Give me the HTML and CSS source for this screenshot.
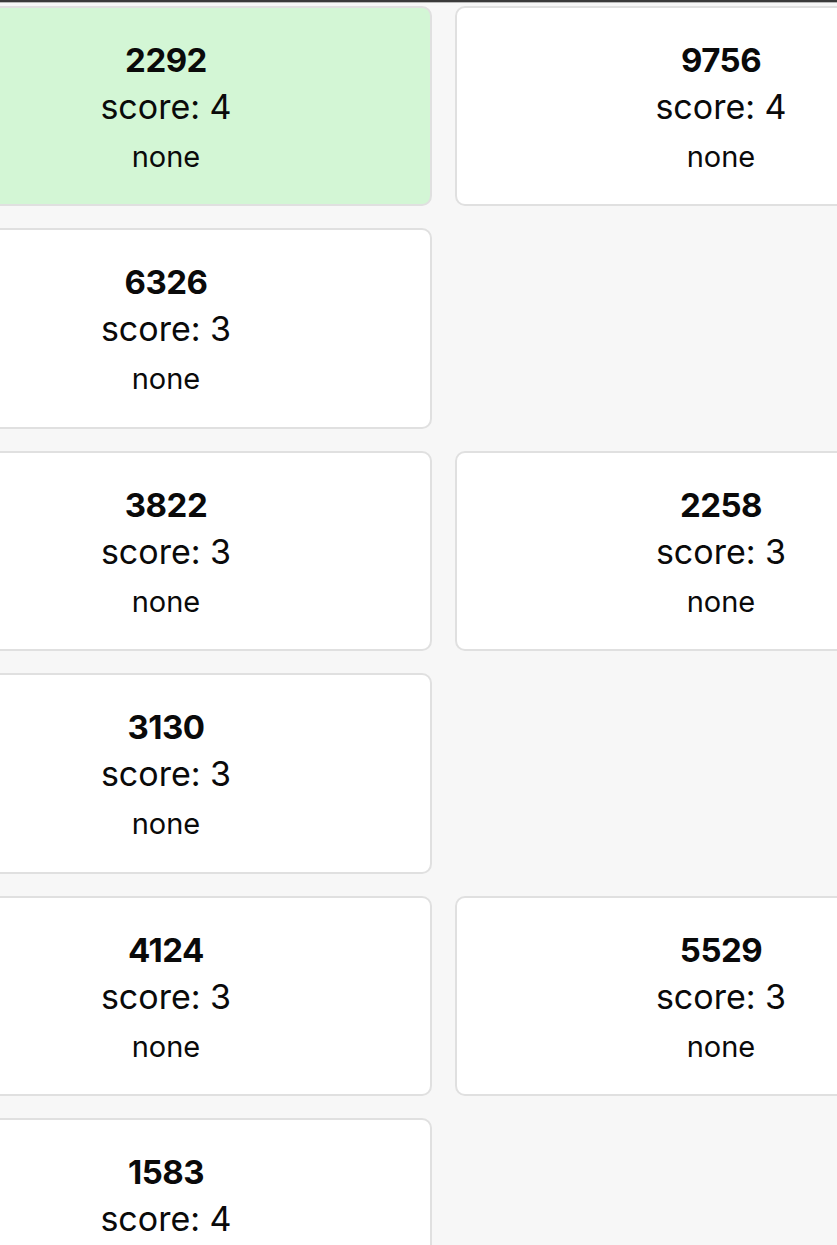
FILE: index.html
```html
<!DOCTYPE html>
<html>
<head>
<meta charset="utf-8">
<link rel="stylesheet" href="styles.css">
</head>
<body>
<div class="topbar"></div>
<div class="grid">
  <div class="card win"><div class="id">2292</div><div class="score">score: 4</div><div class="note">none</div></div>
  <div class="card"><div class="id">9756</div><div class="score">score: 4</div><div class="note">none</div></div>
  <div class="card"><div class="id">6326</div><div class="score">score: 3</div><div class="note">none</div></div>
  <div class="empty"></div>
  <div class="card"><div class="id">3822</div><div class="score">score: 3</div><div class="note">none</div></div>
  <div class="card"><div class="id">2258</div><div class="score">score: 3</div><div class="note">none</div></div>
  <div class="card"><div class="id">3130</div><div class="score">score: 3</div><div class="note">none</div></div>
  <div class="empty"></div>
  <div class="card"><div class="id">4124</div><div class="score">score: 3</div><div class="note">none</div></div>
  <div class="card"><div class="id">5529</div><div class="score">score: 3</div><div class="note">none</div></div>
  <div class="card"><div class="id">1583</div><div class="score">score: 4</div><div class="note">none</div></div>
  <div class="empty"></div>
</div>
</body>
</html>
```
FILE: styles.css
```css
html, body {
  margin: 0;
  padding: 0;
  background: #f7f7f7;
  overflow: hidden;
}
body {
  width: 837px;
  height: 1245px;
  font-family: Inter, "Noto Sans", sans-serif;
  color: #0a0a0a;
}
.topbar {
  height: 2px;
  background: #3a3a3a;
  border-bottom: 1px solid #b8b8b8;
}
.grid {
  display: grid;
  grid-template-columns: 532px 532px;
  grid-auto-rows: 200.4px;
  column-gap: 23px;
  row-gap: 22px;
  margin: 3px 0 0 -100px;
}
.card {
  box-sizing: border-box;
  background: #fff;
  border: 2px solid #e0e0e0;
  border-radius: 10px;
  display: flex;
  flex-direction: column;
  align-items: center;
  padding-top: 32px;
}
.card.win {
  background: #d3f6d5;
}
.id {
  font-weight: 700;
  font-size: 33px;
  line-height: 40px;
  letter-spacing: -0.5px;
}
.score {
  font-size: 34px;
  line-height: 54px;
}
.note {
  font-size: 29px;
  line-height: 46px;
}
```
